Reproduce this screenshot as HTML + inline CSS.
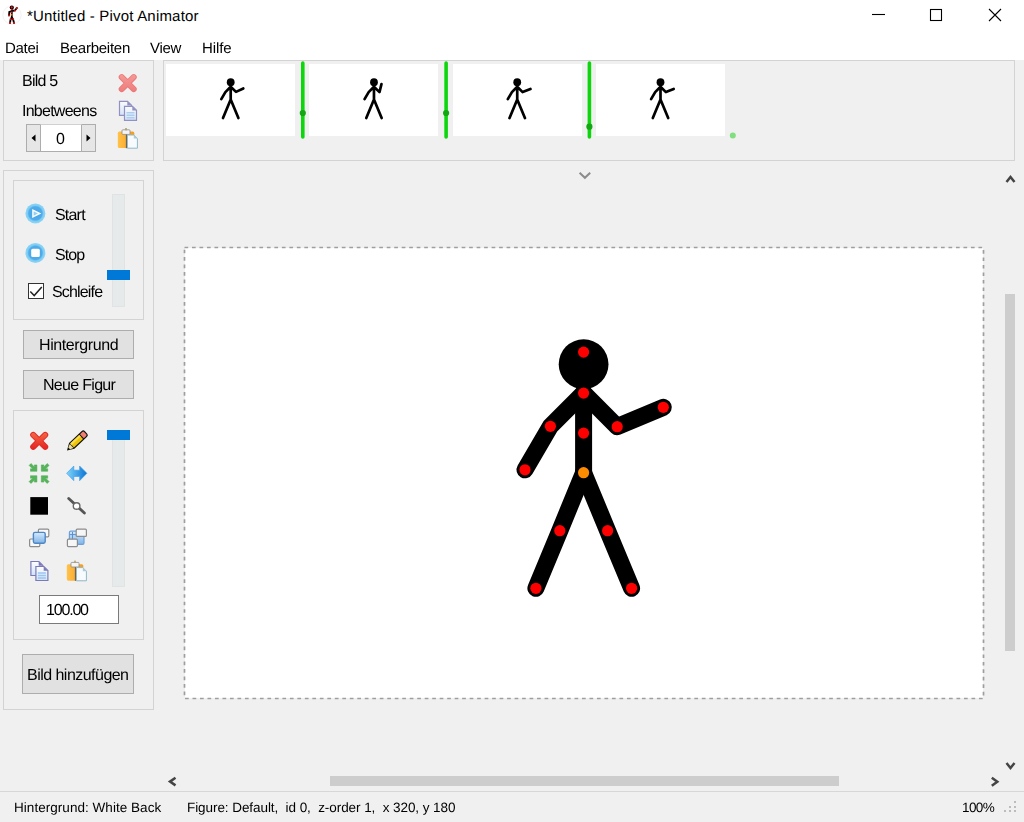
<!DOCTYPE html>
<html lang="de"><head><meta charset="utf-8"><title>Pivot Animator</title>
<style>
html,body{margin:0;padding:0;}
body{width:1024px;height:822px;overflow:hidden;background:#f0f0f0;position:relative;font-family:'Liberation Sans',sans-serif;}
.t{position:absolute;text-rendering:geometricPrecision;will-change:transform;white-space:pre;line-height:1;font-family:'Liberation Sans',sans-serif;}
.a{position:absolute;box-sizing:border-box;}
.grp{border:1px solid #d3d3d3;}
.btn{background:#e1e1e1;border:1px solid #adadad;}
svg{position:absolute;overflow:visible;}

</style></head>
<body>
<div class="a" style="left:0;top:0;width:1024px;height:60px;background:#fff"></div>
<!-- frame info panel -->
<div class="a grp" style="left:3px;top:60px;width:151px;height:101px"></div>
<!-- timeline -->
<div class="a grp" style="left:163px;top:60px;width:852px;height:101px"></div>
<div class="a" style="left:166px;top:64px;width:129px;height:72px;background:#fff"></div>
<div class="a" style="left:309px;top:64px;width:129px;height:72px;background:#fff"></div>
<div class="a" style="left:453px;top:64px;width:129px;height:72px;background:#fff"></div>
<div class="a" style="left:596px;top:64px;width:129px;height:72px;background:#fff"></div>
<!-- left outer panel -->
<div class="a grp" style="left:3px;top:170px;width:151px;height:540px"></div>
<div class="a grp" style="left:13px;top:180px;width:131px;height:140px"></div>
<div class="a grp" style="left:13px;top:410px;width:131px;height:230px"></div>
<div class="a btn" style="left:23px;top:330px;width:111px;height:29px"></div>
<div class="a btn" style="left:23px;top:370px;width:111px;height:29px"></div>
<div class="a btn" style="left:22px;top:654px;width:112px;height:40px"></div>
<!-- canvas -->
<div class="a" style="left:185px;top:248px;width:798px;height:450px;background:#fff"></div>
<!-- canvas dashed border -->
<svg style="left:0;top:0" width="1024" height="822">
<rect x="184.5" y="247.5" width="799" height="451" fill="none" stroke="#9e9e9e" stroke-width="1.7" stroke-dasharray="3.7 3.79"/>
</svg>
<!-- main figure -->
<svg style="left:0;top:0" width="1024" height="822">
<g stroke="#000" stroke-width="17" stroke-linecap="round" stroke-linejoin="round" fill="none">
<path d="M583.6 393.1 L583.6 472.7"/>
<path d="M583.6 393.1 L550.4 426.3 L525 469.8"/>
<path d="M583.6 393.1 L617.2 426.7 L663.3 407.3"/>
<path d="M583.6 472.7 L559.8 530.7 L535.9 588.3"/>
<path d="M583.6 472.7 L607.6 530.7 L631.6 588.3"/>
</g>
<circle cx="583.6" cy="364.2" r="24.9" fill="#000"/>
<g fill="#ff0000">
<circle cx="583.6" cy="352.1" r="5.6"/>
<circle cx="583.6" cy="393.1" r="5.6"/>
<circle cx="583.6" cy="433.1" r="5.6"/>
<circle cx="550.4" cy="426.3" r="5.6"/>
<circle cx="525" cy="469.8" r="5.6"/>
<circle cx="617.2" cy="426.7" r="5.6"/>
<circle cx="663.3" cy="407.3" r="5.6"/>
<circle cx="559.8" cy="530.7" r="5.6"/>
<circle cx="535.9" cy="588.3" r="5.6"/>
<circle cx="607.6" cy="530.7" r="5.6"/>
<circle cx="631.6" cy="588.3" r="5.6"/>
</g>
<circle cx="583.6" cy="472.7" r="5.6" fill="#ff8c00"/>
</svg>
<!-- thumbnails -->
<svg style="left:0;top:0" width="1024" height="822">
<g stroke="#000" stroke-width="2.7" stroke-linecap="round" stroke-linejoin="round" fill="none">
<g id="f1">
<path d="M230.7 86.8 L230.7 99.5 M230.7 86.8 L225.4 92.1 L221.3 99.1 M230.7 86.8 L236 91.9 L243.3 88.5 M230.7 99.5 L223 118.1 M230.7 99.5 L238.4 118.1"/>
</g>
<g transform="translate(143.27 0)">
<path d="M230.7 86.8 L230.7 99.5 M230.7 86.8 L225.4 92.1 L221.3 99.1 M230.7 86.8 L236.2 92.1 L238.2 84.1 M230.7 99.5 L223 118.1 M230.7 99.5 L238.4 118.1"/>
</g>
<g transform="translate(286.53 0)">
<path d="M230.7 86.8 L230.7 99.5 M230.7 86.8 L225.4 92.1 L221.3 99.1 M230.7 86.8 L236.1 92.1 L243.9 89 M230.7 99.5 L223 118.1 M230.7 99.5 L238.4 118.1"/>
</g>
<g transform="translate(429.8 0)">
<path d="M230.7 86.8 L230.7 99.5 M230.7 86.8 L225.4 92.1 L221.3 99.1 M230.7 86.8 L236.1 92.1 L243.9 89 M230.7 99.5 L223 118.1 M230.7 99.5 L238.4 118.1"/>
</g>
</g>
<g fill="#000">
<circle cx="230.7" cy="82.2" r="3.9"/><circle cx="373.97" cy="82.2" r="3.9"/><circle cx="517.23" cy="82.2" r="3.9"/><circle cx="660.5" cy="82.2" r="3.9"/>
</g>
<!-- green separators -->
<g stroke="#0dd60d" stroke-width="3.6" stroke-linecap="round">
<path d="M302.8 63 L302.8 137"/><path d="M446.1 63 L446.1 137"/><path d="M589.4 63 L589.4 137"/>
</g>
<g fill="#12a812">
<circle cx="302.8" cy="113" r="3.1"/><circle cx="446.1" cy="113" r="3.1"/><circle cx="589.4" cy="126.7" r="3.1"/>
</g>
<circle cx="732.8" cy="135.4" r="3" fill="#80e080"/>
</svg>
<!-- title bar: app icon + window buttons -->
<svg style="left:0;top:0" width="1024" height="60">
<circle cx="12" cy="15" r="9.2" fill="none" stroke="#f2f2f2" stroke-width="1"/>
<g stroke="#000" stroke-width="1.8" stroke-linecap="round" fill="none">
<path d="M11.8 10 L11.8 17 M11.8 11 L15 10.5 L16.8 8 M11.8 11 L9.3 12 L9 15.3 M11.8 17 L10.5 20 L10 23 M11.8 17 L13.3 20 L14 23"/>
</g>
<circle cx="11.8" cy="7.6" r="2.1" fill="#000"/>
<g fill="#e01818">
<circle cx="11.8" cy="7.2" r="1"/><circle cx="11.8" cy="9.5" r="0.9"/><circle cx="16.8" cy="8" r="1.1"/><circle cx="9" cy="15.4" r="1"/><circle cx="15" cy="10.6" r="0.9"/><circle cx="11.5" cy="12.3" r="0.9"/>
<circle cx="10.6" cy="19" r="0.9"/><circle cx="13.2" cy="19" r="0.9"/><circle cx="10" cy="23" r="1"/><circle cx="14" cy="23" r="1"/>
</g>
<circle cx="11.8" cy="14.8" r="1" fill="#c07818"/>
<g stroke="#000" stroke-width="1.1" fill="none">
<path d="M872 14.5 L885 14.5"/>
<rect x="930.5" y="9.5" width="11" height="11"/>
<path d="M989 9 L1001 21 M1001 9 L989 21"/>
</g>
</svg>
<!-- scrollbars / chevrons -->
<div class="a" style="left:1005px;top:294px;width:10px;height:357px;background:#cdcdcd"></div>
<div class="a" style="left:330px;top:776px;width:509px;height:10px;background:#cdcdcd"></div>
<div class="a" style="left:0;top:791px;width:1024px;height:1px;background:#d7d7d7"></div>
<svg style="left:0;top:0" width="1024" height="822">
<path d="M579.6 172.8 L584.9 177.8 L590.2 172.8" fill="none" stroke="#8c8c8c" stroke-width="2"/>
<g fill="none" stroke="#444" stroke-width="2.5">
<path d="M1006.5 182 L1010.5 177 L1014.5 182"/>
<path d="M1006.5 763 L1010.5 768 L1014.5 763"/>
<path d="M175.5 777.8 L170 781.6 L175.5 785.4"/>
<path d="M991.8 777.8 L997.3 781.8 L991.8 785.8"/>
</g>
<g fill="#bcbcbc">
<rect x="1014" y="801" width="2" height="2"/><rect x="1014" y="806" width="2" height="2"/><rect x="1014" y="810" width="2" height="2"/>
<rect x="1009" y="806" width="2" height="2"/><rect x="1009" y="810" width="2" height="2"/>
<rect x="1004" y="810" width="2" height="2"/>
</g>
</svg>
<!-- spinner -->
<div class="a" style="left:26px;top:124px;width:70px;height:28px;background:#e6e6e6;border:1px solid #adadad"></div>
<div class="a" style="left:40px;top:124px;width:42px;height:28px;background:#fff;border:1px solid #adadad;border-top-color:#d0d0d0"></div>
<svg style="left:0;top:0" width="160" height="160">
<path d="M35.5 134.5 L31.5 138 L35.5 141.5 Z M86.5 134.5 L90.5 138 L86.5 141.5 Z" fill="#000"/>
</svg>
<!-- playback sliders -->
<div class="a" style="left:112px;top:194px;width:13px;height:113px;background:#e7eaea;border:1px solid #e0e3e3"></div>
<div class="a" style="left:107px;top:270px;width:23px;height:10px;background:#0078d7"></div>
<div class="a" style="left:112px;top:436px;width:13px;height:151px;background:#e7eaea;border:1px solid #e0e3e3"></div>
<div class="a" style="left:107px;top:430px;width:23px;height:10px;background:#0078d7"></div>
<!-- checkbox -->
<div class="a" style="left:28px;top:283px;width:16px;height:16px;background:#fff;border:1px solid #333"></div>
<svg style="left:0;top:0" width="160" height="320">
<path d="M30.3 291.6 L34.2 295.6 L41.8 287" fill="none" stroke="#222" stroke-width="1.5"/>
</svg>
<!-- input -->
<div class="a" style="left:39px;top:595px;width:80px;height:29px;background:#fff;border:1px solid #7a7a7a"></div>
<!-- icons -->
<svg style="left:0;top:0" width="160" height="720">
<defs>
<linearGradient id="gRed" gradientUnits="userSpaceOnUse" x1="0" y1="-9" x2="0" y2="9"><stop offset="0" stop-color="#f46a45"/><stop offset="1" stop-color="#e41f1f"/></linearGradient>
<linearGradient id="gPink" gradientUnits="userSpaceOnUse" x1="0" y1="-9" x2="0" y2="9"><stop offset="0" stop-color="#f49a98"/><stop offset="1" stop-color="#ee7c7c"/></linearGradient>
<linearGradient id="gBlueA" x1="0" y1="0" x2="1" y2="0"><stop offset="0" stop-color="#7fd4fb"/><stop offset="1" stop-color="#0a74d6"/></linearGradient>
<linearGradient id="gPage" x1="0" y1="0" x2="0" y2="1"><stop offset="0" stop-color="#ffffff"/><stop offset="1" stop-color="#cfe2fa"/></linearGradient>
<linearGradient id="gOr" x1="0" y1="0" x2="1" y2="0"><stop offset="0" stop-color="#ffc24a"/><stop offset="1" stop-color="#f79a1c"/></linearGradient>
<linearGradient id="gBl" x1="0" y1="0" x2="0" y2="1"><stop offset="0" stop-color="#d6eafc"/><stop offset="1" stop-color="#7fb4e8"/></linearGradient>
<radialGradient id="gPlay" cx="0.5" cy="0.5" r="0.5"><stop offset="0" stop-color="#4aa4e6"/><stop offset="0.66" stop-color="#4fabe9"/><stop offset="0.8" stop-color="#7ecdf3"/><stop offset="1" stop-color="#8ed5f5"/></radialGradient>
<g id="icoX"><path d="M-6 -6 L6 6 M6 -6 L-6 6" fill="none" stroke-width="6" stroke-linecap="round"/></g>
<g id="icoXi"><path d="M-6 -6 L6 6 M6 -6 L-6 6" fill="none" stroke-width="4.2" stroke-linecap="round"/></g>
<g id="icoCopy">
<path d="M0.5 0.5 H8.5 L12.5 4.5 V14.5 H0.5 Z" fill="url(#gPage)" stroke="#7a7ab8" stroke-width="1.2"/>
<path d="M8.3 0.8 L12.3 4.8 H8.3 Z" fill="#7a7ab8"/>
<path d="M5.5 5.5 H13.5 L17.5 9.5 V19.5 H5.5 Z" fill="url(#gPage)" stroke="#7a7ab8" stroke-width="1.2"/>
<path d="M13.3 5.8 L17.3 9.8 H13.3 Z" fill="#7a7ab8"/>
<path d="M7.5 12 H15.5 M7.5 14.5 H15.5 M7.5 17 H15.5" stroke="#9cc4f0" stroke-width="1.4"/>
</g>
<g id="icoPaste">
<rect x="0" y="3" width="16.5" height="16.5" rx="1.6" fill="url(#gOr)"/>
<rect x="4.2" y="1.2" width="8" height="4.6" rx="0.8" fill="#f4f4f4" stroke="#8a8a8a" stroke-width="0.8"/>
<rect x="7.4" y="-0.6" width="1.6" height="2.4" fill="#b0a070"/>
<path d="M9.6 6.4 H16 L19.6 10 V19.6 H9.6 Z" fill="#f7fbfd" stroke="#8fb8c8" stroke-width="1"/>
<path d="M16 6.4 L19.6 10 H16 Z" fill="#a8ccd8"/>
<path d="M8.6 6 V19.6" stroke="#5a5a5a" stroke-width="1"/>
</g>
</defs>
<!-- frame panel icons -->
<use href="#icoX" x="127.7" y="83.1" stroke="#ec7878"/><use href="#icoXi" x="127.7" y="83.1" stroke="url(#gPink)"/>
<g transform="translate(119 100.8)"><use href="#icoCopy" opacity="0.8"/></g>
<g transform="translate(117.8 128.6)"><use href="#icoPaste"/></g>
<!-- start/stop -->
<circle cx="35.4" cy="213.4" r="10" fill="url(#gPlay)"/>
<path d="M32.2 208.9 L41.3 213.4 L32.2 218 Z" fill="#fff"/>
<path d="M33.6 211.2 L38 213.4 L33.6 215.7 Z" fill="#8fd0f3"/>
<circle cx="35.4" cy="252.9" r="10" fill="url(#gPlay)"/>
<rect x="31.2" y="248.8" width="8.6" height="8.2" rx="1.5" fill="#fff"/>
<!-- tools -->
<use href="#icoX" x="39.2" y="440.9" stroke="#e22626"/><use href="#icoXi" x="39.2" y="440.9" stroke="url(#gRed)"/>
<!-- pencil -->
<g transform="translate(67 450.4) rotate(-43.5)">
<path d="M0 0 L6.5 -3.9 L24 -3.9 Q26.2 -3.9 26.2 -1.8 V1.8 Q26.2 3.9 24 3.9 L6.5 3.9 Z" fill="#111"/>
<path d="M7 -2.7 H19.5 V2.7 H7 Z" fill="#efc30a"/>
<path d="M7 -2.7 H19.5 V-0.6 H7 Z" fill="#f8de4c"/>
<path d="M20.6 -2.8 H23.8 Q25 -2.8 25 -1.6 V1.6 Q25 2.8 23.8 2.8 H20.6 Z" fill="#f07f72"/>
<path d="M3 -1.3 L6.4 -2.6 V2.6 L3 1.3 Z" fill="#e8dca0"/>
</g>
<!-- green arrows -->
<g fill="#55b35a" stroke="#4aa84f" stroke-width="0.5">
<g transform="translate(39.1 473.5)">
<path id="ga" d="M-2.2 -2.2 H-8.6 V-4.8 L-6.3 -4.4 L-10 -8.1 L-8.1 -10 L-4.4 -6.3 L-4.8 -8.6 H-2.2 Z"/>
<use href="#ga" transform="scale(-1 1)"/>
<use href="#ga" transform="scale(1 -1)"/>
<use href="#ga" transform="scale(-1 -1)"/>
</g>
</g>
<!-- blue double arrow -->
<path d="M66.6 473.3 L73.8 466 V470.2 H79.6 V466 L86.9 473.3 L79.6 480.7 V476.5 H73.8 V480.7 Z" fill="url(#gBlueA)" stroke="#3b9be6" stroke-width="0.6" stroke-linejoin="round"/>
<!-- black square -->
<rect x="30.3" y="497.1" width="17.7" height="17.6" fill="#000"/>
<!-- segment -->
<path d="M68.7 498.5 L84.4 513" stroke="#555" stroke-width="2.8" stroke-linecap="round"/>
<circle cx="76.6" cy="506" r="3.3" fill="#fff" stroke="#666" stroke-width="1.4"/>
<!-- bring to front -->
<g stroke="#8c8c8c" stroke-width="1.2" fill="#f8f8f8">
<rect x="38.4" y="529.2" width="10.4" height="7.6" rx="1"/>
<rect x="29.6" y="539" width="10.2" height="7.6" rx="1"/>
</g>
<rect x="33.4" y="532.4" width="11.8" height="10.8" rx="1.6" fill="url(#gBl)" stroke="#4f86c6" stroke-width="1.4"/>
<!-- send to back -->
<rect x="69.4" y="531.2" width="14.6" height="13.2" rx="1.4" fill="url(#gBl)" stroke="#6fa0d8" stroke-width="1.2"/>
<path d="M72.5 532 V544 M69.8 534.6 H84" stroke="#5a90d0" stroke-width="1"/>
<g stroke="#8c8c8c" stroke-width="1.2" fill="#f6f6f6">
<rect x="76.2" y="529.2" width="10.2" height="7.2" rx="1"/>
<rect x="67.4" y="539.2" width="10" height="7.4" rx="1"/>
</g>
<!-- copy / paste -->
<g transform="translate(30.4 561)"><use href="#icoCopy"/></g>
<g transform="translate(66.8 561.2)"><use href="#icoPaste"/></g>
</svg>

<div class="t" style="will-change:auto;left:27.00px;top:9.00px;font-size:15px;letter-spacing:0.192px;color:#000">*Untitled - Pivot Animator</div>
<div class="t" style="left:5.00px;top:41.00px;font-size:15px;letter-spacing:-0.306px;color:#000">Datei</div>
<div class="t" style="left:59.50px;top:41.00px;font-size:15px;letter-spacing:-0.256px;color:#000">Bearbeiten</div>
<div class="t" style="left:150.00px;top:41.00px;font-size:15px;letter-spacing:-0.312px;color:#000">View</div>
<div class="t" style="left:201.50px;top:41.00px;font-size:15px;letter-spacing:-0.103px;color:#000">Hilfe</div>
<div class="t" style="left:22.40px;top:74.00px;font-size:16px;letter-spacing:-0.772px;color:#000">Bild 5</div>
<div class="t" style="left:22.40px;top:104.00px;font-size:16px;letter-spacing:-0.744px;color:#000">Inbetweens</div>
<div class="t" style="left:56.30px;top:132.00px;font-size:16px;letter-spacing:0.000px;color:#000">0</div>
<div class="t" style="left:54.90px;top:208.00px;font-size:16px;letter-spacing:-0.799px;color:#000">Start</div>
<div class="t" style="left:55.00px;top:248.00px;font-size:16px;letter-spacing:-0.905px;color:#000">Stop</div>
<div class="t" style="left:52.10px;top:285.00px;font-size:16px;letter-spacing:-0.840px;color:#000">Schleife</div>
<div class="t" style="left:38.90px;top:338.00px;font-size:16px;letter-spacing:-0.401px;color:#000">Hintergrund</div>
<div class="t" style="left:42.70px;top:378.00px;font-size:16px;letter-spacing:-0.696px;color:#000">Neue Figur</div>
<div class="t" style="left:45.50px;top:603.00px;font-size:16px;letter-spacing:-1.190px;color:#000">100.00</div>
<div class="t" style="left:27.30px;top:668.00px;font-size:16px;letter-spacing:-0.528px;color:#000">Bild hinzufügen</div>
<div class="t" style="left:13.50px;top:801.00px;font-size:13.5px;letter-spacing:0.041px;color:#000">Hintergrund: White Back</div>
<div class="t" style="left:187.10px;top:801.00px;font-size:13.5px;letter-spacing:-0.066px;color:#000">Figure: Default,  id 0,  z-order 1,  x 320, y 180</div>
<div class="t" style="left:962.30px;top:801.00px;font-size:13.5px;letter-spacing:-0.583px;color:#000">100%</div>
</body></html>
